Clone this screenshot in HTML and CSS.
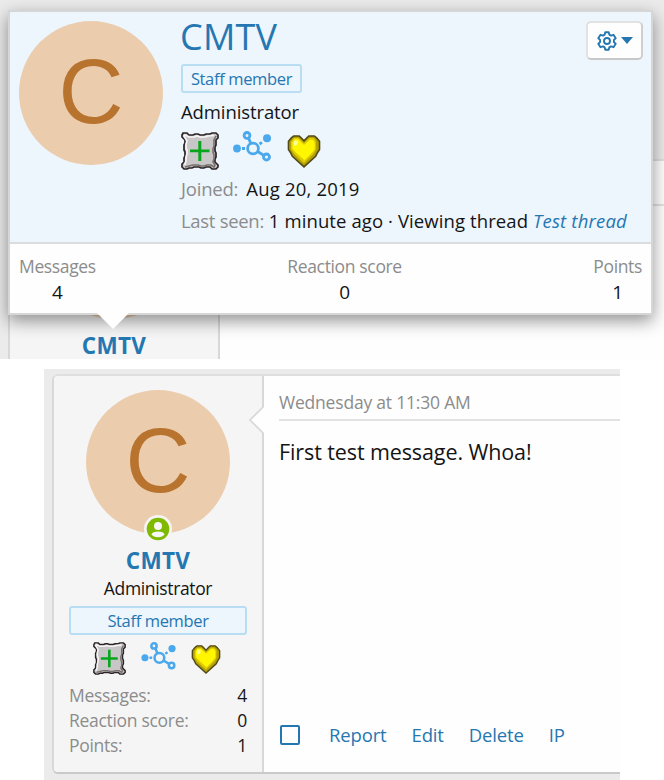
FILE: index.html
```html
<!DOCTYPE html>
<html lang="en">
<head>
<meta charset="utf-8">
<title>Test thread</title>
<link rel="stylesheet" href="styles.css">
</head>
<body>
<svg class="sprites" aria-hidden="true">
  <symbol id="plate" viewBox="0 0 38 38">
    <path d="M2 1H6L8 3H12L14 2H17L19 3H23L25 2H29L31 1H35L37 3V6L35 8V13L34 15V19L35 21V25L34 27V30L37 33V35L35 37H31L29 35H25L23 36H20L18 35H13L11 36H8L6 37H3L1 35V32L3 30V26L4 24V20L3 18V13L4 11V8L1 5V3Z" fill="#c8c6c6" stroke="#2b2325" stroke-width="1.7"/>
    <path d="M3.5 33L5 29V25L6 22V18L5 16V12L6 9L3 4L4 3L8 5H13L16 4L19 5H24L27 4L33 3.5" fill="none" stroke="#f7f5f5" stroke-width="1.7"/>
    <path d="M35 4L33 8V14L32 17V20L33 23V27L32 30L34 33L33 35L30 33H26L23 34H20L17 33H12L8 34L4 35" fill="none" stroke="#77706f" stroke-width="1.6"/>
    <path d="M17.3 9H20.3V17.5H28.5V20.3H20.3V29H17.3V20.3H9V17.5H17.3Z" fill="#08a61d"/>
  </symbol>
  <symbol id="nodes" viewBox="0 0 38 31">
    <g fill="none" stroke="#4aa8ec" stroke-width="2.8">
      <circle cx="20" cy="17.5" r="5.4"/>
      <circle cx="14" cy="4.4" r="2.9"/>
      <circle cx="33.5" cy="26" r="3"/>
      <path d="M15.5 7L17.8 12.4M24.5 20.5L30.7 24.3M9 17.5H12M26.5 13L29 11.4"/>
    </g>
    <circle cx="4" cy="17.5" r="3.9" fill="#4aa8ec"/>
    <circle cx="34" cy="7.3" r="4" fill="#4aa8ec"/>
  </symbol>
  <symbol id="heart" viewBox="0 0 17 17">
    <path d="M3.2 .5H6L7 1.5L8.5 3L10 1.5L11 .5H13.8L15 1.5L16.5 3.3V7.5L15.5 9L14.5 11L8.5 16.4L2.5 11L1.5 9L.5 7.5V3.3L2 1.5Z" fill="#b3a007" stroke="#514a16" stroke-width=".8"/>
    <path d="M3.3 1.6H5.8L8.5 4.3L11.2 1.6H13.4L14.6 3V7.6L13.4 9.6L8.5 14.5L3.4 9.8L1.8 7.3V3.5Z" fill="#ddcb05"/>
    <path d="M3.5 2.2H5.5L8.5 5.2L11.5 2.4H13L14 3.7V7.3L12.5 9.3L8.8 13L4 8.7L2.5 7V3.8Z" fill="#fff600"/>
    <path d="M3.4 3H5.2V4.4L4.4 5.4H3.2Z" fill="#ffff9c"/>
  </symbol>
</svg>

<section class="scene scene-top">
  <div class="post">
    <aside class="user">
      <div class="avatar"></div>
      <div class="username">CMTV</div>
    </aside>
    <div class="main"><div class="date"></div></div>
  </div>

  <div class="tooltip">
    <header class="card">
      <div class="avatar">C</div>
      <div class="info">
        <h1>CMTV</h1>
        <span class="banner">Staff member</span>
        <div class="role">Administrator</div>
        <div class="icons">
          <svg class="plate"><use href="#plate"/></svg>
          <svg class="nodes"><use href="#nodes"/></svg>
          <svg class="heart"><use href="#heart"/></svg>
        </div>
        <div class="line joined"><span>Joined:</span> Aug 20, 2019</div>
        <div class="line seen"><span>Last seen:</span> 1 minute ago · Viewing thread <em>Test thread</em></div>
      </div>
      <button class="gear" aria-label="Options">
        <svg width="20" height="20" viewBox="0 0 20 20" fill="none" stroke="#2577b1" stroke-width="1.9" stroke-linejoin="round">
          <path d="M8.3 1.2H11.7L12.3 3.6L14 4.6L16.5 3.8L18.7 7.2L16.9 8.9V11.1L18.7 12.8L16.5 16.2L14 15.4L12.3 16.4L11.7 18.8H8.3L7.7 16.4L6 15.4L3.5 16.2L1.3 12.8L3.1 11.1V8.9L1.3 7.2L3.5 3.8L6 4.6L7.7 3.6Z"/>
          <circle cx="10" cy="10" r="3"/>
        </svg>
        <svg width="12" height="7" viewBox="0 0 12 7"><path d="M0 0H12L6 7Z" fill="#2577b1"/></svg>
      </button>
    </header>
    <dl class="totals">
      <div><dt>Messages</dt><dd>4</dd></div>
      <div><dt>Reaction score</dt><dd>0</dd></div>
      <div><dt>Points</dt><dd>1</dd></div>
    </dl>
    <svg class="arrow" width="32" height="16" viewBox="0 0 32 16"><path d="M0 0H32L16 16Z" fill="#fefefe"/></svg>
  </div>
</section>

<section class="scene scene-bottom">
  <div class="post">
    <aside class="user">
      <div class="avatar">C
        <svg class="online" width="28" height="28" viewBox="0 0 28 28">
          <circle cx="14" cy="14" r="14" fill="#f5f5f5"/>
          <circle cx="14" cy="14" r="11.3" fill="#7fb900"/>
          <circle cx="14" cy="11" r="4" fill="#f7f7f7"/>
          <ellipse cx="14" cy="19.3" rx="6.3" ry="2.9" fill="#f7f7f7"/>
        </svg>
      </div>
      <div class="username">CMTV</div>
      <div class="role">Administrator</div>
      <div class="banner">Staff member</div>
      <div class="icons">
        <svg class="plate"><use href="#plate"/></svg>
        <svg class="nodes"><use href="#nodes"/></svg>
        <svg class="heart"><use href="#heart"/></svg>
      </div>
      <dl class="stats">
        <div><dt>Messages:</dt><dd>4</dd></div>
        <div><dt>Reaction score:</dt><dd>0</dd></div>
        <div><dt>Points:</dt><dd>1</dd></div>
      </dl>
      <svg class="notch" width="15" height="28" viewBox="0 0 15 28"><path d="M15 0L1 14L15 28" fill="#fefefe" stroke="#d8d8d8" stroke-width="1.6"/></svg>
    </aside>
    <div class="main">
      <div class="date">Wednesday at 11:30 AM</div>
      <p class="message">First test message. Whoa!</p>
      <div class="actions">
        <i class="check"></i>
        <a class="report">Report</a><a class="edit">Edit</a><a class="delete">Delete</a><a>IP</a>
      </div>
    </div>
  </div>
</section>
</body>
</html>
```

FILE: styles.css
```css
* { box-sizing: border-box; margin: 0; padding: 0; }

body {
  width: 664px;
  height: 780px;
  overflow: hidden;
  background: #fff;
  color: #141414;
  font: 18.5px/26px "Open Sans", "Noto Sans", sans-serif;
  letter-spacing: -0.1px;
}

svg { display: block; }
.sprites { position: absolute; width: 0; height: 0; }

.scene { position: relative; overflow: hidden; background: #ebebeb; }
.scene-top { height: 359px; padding: 159px 0 0 8px; }
.scene-bottom { width: 576px; height: 411px; margin: 10px 0 0 44px; padding: 5px 0 0 8px; }

.post {
  display: flex;
  height: 400px;
  border: 2px solid #d8d8d8;
  border-top-color: #dfdfdf;
  border-bottom-color: #cacaca;
  border-right: 0;
  border-radius: 6px 0 0 6px;
  background: #fefefe;
}

.user {
  position: relative;
  flex: none;
  width: 210px;
  padding: 14px 15px 0;
  border-right: 2px solid #d8d8d8;
  border-radius: 5px 0 0 5px;
  background: #f5f5f5;
  text-align: center;
}

.avatar {
  position: relative;
  flex: none;
  width: 144px;
  height: 144px;
  border-radius: 50%;
  background: #ebccad;
  color: #b8732e;
  font: 90px/143px "Liberation Sans", sans-serif;
  letter-spacing: 0;
  text-align: center;
}
.user .avatar { margin: 0 auto 0 17px; }
.online { position: absolute; left: 58px; top: 125px; }

.username { height: 42px; color: #2577b1; font-size: 22.5px; font-weight: 700; line-height: 53px; letter-spacing: 0.3px; }
.user .role { height: 30px; line-height: 24px; }
.user .username + .role { font-size: 17.5px; letter-spacing: -0.35px; }

.banner {
  display: block;
  height: 29px;
  border: 2px solid #b9def3;
  border-radius: 3px;
  background: #edf5fd;
  color: #2577b1;
  font-size: 16.5px;
  line-height: 25px;
  letter-spacing: -0.35px;
  text-align: center;
}

.icons { display: flex; align-items: flex-start; }
.icons .plate { width: 38px; height: 38px; }
.icons .nodes { width: 38px; height: 31px; margin: -1px 0 0 14px; }
.icons .heart { width: 34px; height: 33px; margin: 3px 0 0 16px; }

.user .icons { height: 41px; margin: 7px 0 0 24px; }
.user .plate { width: 33px; height: 33px; }
.user .nodes { width: 35px; height: 28px; margin: 0 0 0 15px; }
.user .heart { width: 30px; height: 29px; margin: 3px 0 0 15px; }

.stats div { display: flex; justify-content: space-between; height: 25px; font-size: 17.5px; line-height: 25px; letter-spacing: -0.3px; }
dt { color: #8c8c8c; }
.notch { position: absolute; right: -2px; top: 30px; }

.main { display: flex; flex: 1; flex-direction: column; padding: 0 0 24px 15px; }
.date { flex: none; height: 45px; padding-top: 13px; border-bottom: 2px solid #e2e2e2; color: #8c8c8c; font-size: 17.5px; letter-spacing: -0.2px; }
.message { margin-top: 16px; font-size: 21.5px; line-height: 30px; }
.actions { display: flex; align-items: center; margin-top: auto; color: #2577b1; letter-spacing: -0.15px; }
.check { width: 20px; height: 20px; margin: 0 29px 0 1px; border: 2px solid #2577b1; border-radius: 2px; }
.actions a { margin-right: 25px; }

.tooltip {
  position: absolute;
  left: 8px;
  top: 10px;
  width: 645px;
  height: 305px;
  border: 2px solid #d6d6d6;
  background: #fefefe;
  box-shadow: 0 6px 16px rgba(0, 0, 0, .42);
}
.card { display: flex; height: 232px; padding: 9px; border-bottom: 2px solid #dcdcdc; background: #edf5fd; }
.info { flex: none; margin-left: 18px; white-space: nowrap; }
h1 { height: 43px; color: #2577b1; font-size: 36px; font-weight: 400; line-height: 31px; letter-spacing: 0.2px; text-indent: -1px; }
.info .banner { width: 121px; }
.info .role { margin: 6px 0 7px; height: 26px; }
.line { height: 32px; line-height: 32px; letter-spacing: 0.1px; }
.line span { color: #8c8c8c; letter-spacing: -0.3px; }
.joined { letter-spacing: 0.2px; }
.joined span { margin-right: 3px; letter-spacing: -0.2px; }
.line em { color: #2577b1; letter-spacing: 0.2px; }
.info .icons { height: 41px; }

.gear {
  position: absolute;
  right: 8px;
  top: 9px;
  display: flex;
  align-items: center;
  justify-content: center;
  gap: 4px;
  width: 57px;
  height: 39px;
  border: 2px solid;
  border-color: #e2e2e2 #cfcfcf #c8c8c8 #e2e2e2;
  border-radius: 5px;
  background: #fefefe;
}

.totals { display: flex; justify-content: space-between; padding: 9px; text-align: center; }
.totals dt { font-size: 17.5px; letter-spacing: -0.35px; line-height: 26px; }
.totals dd { font-size: 19px; line-height: 27px; }
.arrow { position: absolute; left: 87px; bottom: -16px; }
```
